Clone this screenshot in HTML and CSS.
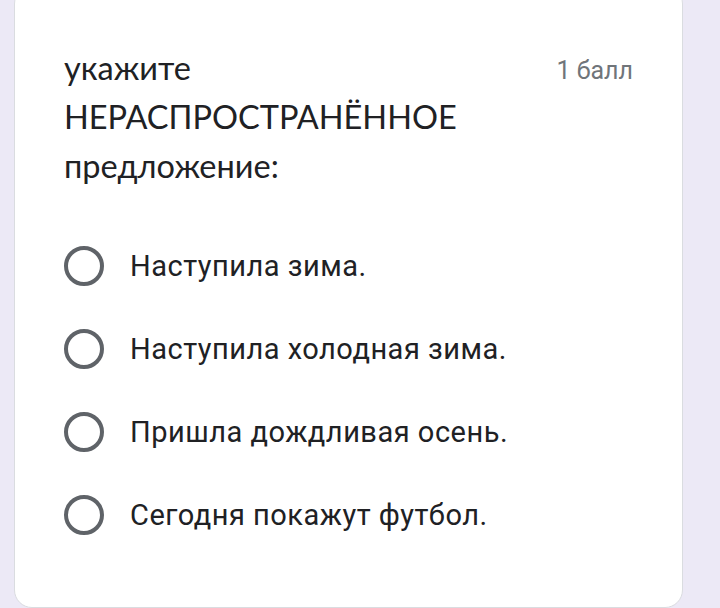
FILE: index.html
```html
<!DOCTYPE html>
<html lang="ru">
<head>
<meta charset="utf-8">
<link rel="stylesheet" href="styles.css">
</head>
<body>
<div class="card">
  <div class="header">
    <div class="title">укажите<br>НЕРАСПРОСТРАНЁННОЕ<br>предложение:</div>
    <div class="points">1 балл</div>
  </div>
  <div class="options">
    <label class="option"><span class="radio"></span><span class="text">Наступила зима.</span></label>
    <label class="option"><span class="radio"></span><span class="text">Наступила холодная зима.</span></label>
    <label class="option"><span class="radio"></span><span class="text">Пришла дождливая осень.</span></label>
    <label class="option"><span class="radio"></span><span class="text">Сегодня покажут футбол.</span></label>
  </div>
</div>
</body>
</html>
```
FILE: styles.css
```css
html, body {
  margin: 0;
  padding: 0;
  background: #ece9f6;
  height: 608px;
  overflow: hidden;
}
body {
  padding: 0 37px 0 14px;
}
.card {
  margin-top: -14px;
  height: 622px;
  box-sizing: border-box;
  background: #ffffff;
  border: 1px solid #dadce0;
  border-radius: 18px;
  padding: 56px 49px 0 49px;
}
.header {
  display: flex;
  justify-content: space-between;
  align-items: flex-start;
}
.title {
  font-family: Lato, "Open Sans", sans-serif;
  font-size: 32.5px;
  line-height: 49px;
  color: #202124;
}
.points {
  font-family: Roboto, sans-serif;
  font-size: 25px;
  line-height: 56px;
  color: #70757a;
}
.options {
  display: flex;
  flex-direction: column;
  gap: 43px;
  margin-top: 56px;
}
.option {
  display: flex;
  align-items: center;
  gap: 26px;
  height: 40px;
}
.radio {
  width: 40px;
  height: 40px;
  box-sizing: border-box;
  border: 4px solid #5f6368;
  border-radius: 50%;
  flex: none;
}
.text {
  font-family: Roboto, sans-serif;
  font-size: 29px;
  letter-spacing: 0.5px;
  color: #202124;
}
```
